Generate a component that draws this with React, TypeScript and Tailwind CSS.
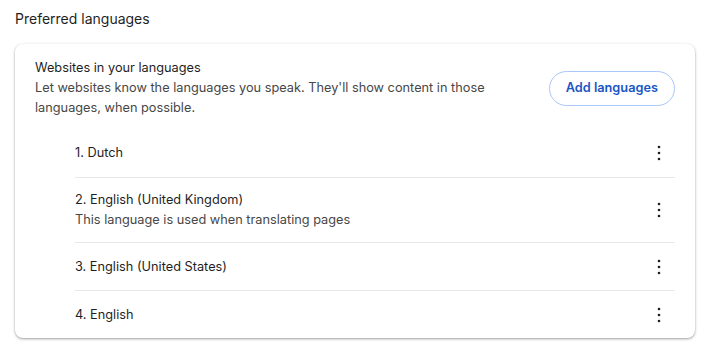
const languages = [
  { name: "1. Dutch" },
  { name: "2. English (United Kingdom)", note: "This language is used when translating pages" },
  { name: "3. English (United States)" },
  { name: "4. English" },
];

const MoreIcon = () => (
  <svg width="20" height="20" viewBox="0 0 20 20" fill="#1f1f1f">
    <circle cx="10" cy="4" r="1.3" />
    <circle cx="10" cy="10" r="1.3" />
    <circle cx="10" cy="16" r="1.3" />
  </svg>
);

export default function App() {
  return (
    <div className="w-[710px] h-[357px] bg-white text-[#1f1f1f] text-[12.75px] leading-5 font-['Inter',sans-serif]">
      <div className="px-[15px] pt-[9px] pb-[15px] text-[14px] leading-5">Preferred languages</div>

      <div className="mx-[15px] w-[680px] rounded-lg bg-white shadow-[0_1px_3px_rgba(0,0,0,0.3),0_1px_2px_rgba(0,0,0,0.1)]">
        <div className="flex items-center justify-between pl-5 pr-5 pt-[14px] pb-[11px]">
          <div>
            <div>Websites in your languages</div>
            <div className="text-[#474747] w-[470px]">
              Let websites know the languages you speak. They'll show content in those languages, when possible.
            </div>
          </div>
          <button className="h-[35px] px-[16px] rounded-full border border-[#a8c7fa] text-[#1a56c4] font-semibold">
            Add languages
          </button>
        </div>

        <div className="ml-[60px] mr-5">
          {languages.map((lang, i) => (
            <div
              key={lang.name}
              className={`flex items-center justify-between ${lang.note ? "h-[65px]" : "h-[48px]"} ${i > 0 ? "border-t border-[#e8e8e8]" : ""}`}
            >
              <div>
                <div>{lang.name}</div>
                {lang.note && <div className="text-[#474747]">{lang.note}</div>}
              </div>
              <button className="w-8 h-8 flex items-center justify-center">
                <MoreIcon />
              </button>
            </div>
          ))}
        </div>
      </div>
    </div>
  );
}
